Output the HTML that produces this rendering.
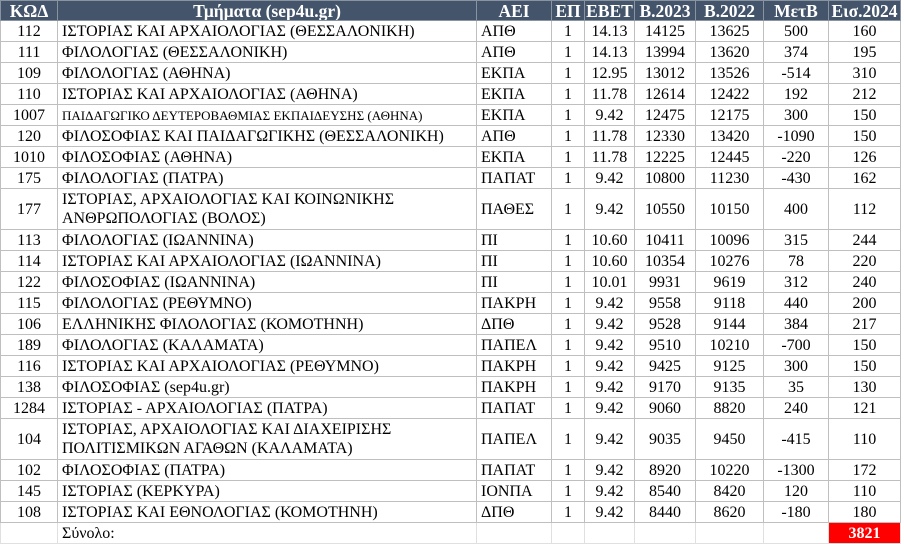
<!DOCTYPE html>
<html><head><meta charset="utf-8"><style>
body{margin:0;background:#fff;width:904px;height:544px;overflow:hidden}
table{border-collapse:collapse;table-layout:fixed;font-family:"Liberation Serif","DejaVu Serif",serif;font-size:16px;color:#000;position:absolute;left:0;top:0}
td,th{border:1px solid #bfbfbf;padding:0 4px;height:20px;line-height:17px;white-space:nowrap;overflow:hidden}
th{background:#44546a;color:#fff;font-weight:bold;text-align:center;border-color:#8a93a0;height:19px;font-size:17.5px;line-height:18px}
td{text-align:center}
td.n{text-align:left}
tr.d td{height:40px}
td.t{white-space:normal;line-height:19px}
.sm{font-size:13px}
.red{background:#ff0000;color:#fff;font-weight:bold}
tr.e td{border-color:#e0e0e0}
</style></head><body>
<table>
<colgroup><col style="width:57px"><col style="width:419px"><col style="width:75px"><col style="width:33px"><col style="width:50px"><col style="width:61px"><col style="width:68px"><col style="width:65px"><col style="width:72px"></colgroup>
<tr><th>ΚΩΔ</th><th>Τμήματα (sep4u.gr)</th><th>ΑΕΙ</th><th style="padding:0">ΕΠ</th><th style="padding:0">ΕΒΕΤ</th><th style="padding:0">Β.2023</th><th style="padding:0">Β.2022</th><th>ΜετΒ</th><th style="padding:0">Εισ.2024</th></tr>
<tr><td>112</td><td class="n">ΙΣΤΟΡΙΑΣ ΚΑΙ ΑΡΧΑΙΟΛΟΓΙΑΣ (ΘΕΣΣΑΛΟΝΙΚΗ)</td><td class="n">ΑΠΘ</td><td>1</td><td>14.13</td><td>14125</td><td>13625</td><td>500</td><td>160</td></tr>
<tr><td>111</td><td class="n">ΦΙΛΟΛΟΓΙΑΣ (ΘΕΣΣΑΛΟΝΙΚΗ)</td><td class="n">ΑΠΘ</td><td>1</td><td>14.13</td><td>13994</td><td>13620</td><td>374</td><td>195</td></tr>
<tr><td>109</td><td class="n">ΦΙΛΟΛΟΓΙΑΣ (ΑΘΗΝΑ)</td><td class="n">ΕΚΠΑ</td><td>1</td><td>12.95</td><td>13012</td><td>13526</td><td>-514</td><td>310</td></tr>
<tr><td>110</td><td class="n">ΙΣΤΟΡΙΑΣ ΚΑΙ ΑΡΧΑΙΟΛΟΓΙΑΣ (ΑΘΗΝΑ)</td><td class="n">ΕΚΠΑ</td><td>1</td><td>11.78</td><td>12614</td><td>12422</td><td>192</td><td>212</td></tr>
<tr><td>1007</td><td class="n sm">ΠΑΙΔΑΓΩΓΙΚΟ ΔΕΥΤΕΡΟΒΑΘΜΙΑΣ ΕΚΠΑΙΔΕΥΣΗΣ (ΑΘΗΝΑ)</td><td class="n">ΕΚΠΑ</td><td>1</td><td>9.42</td><td>12475</td><td>12175</td><td>300</td><td>150</td></tr>
<tr><td>120</td><td class="n">ΦΙΛΟΣΟΦΙΑΣ ΚΑΙ ΠΑΙΔΑΓΩΓΙΚΗΣ (ΘΕΣΣΑΛΟΝΙΚΗ)</td><td class="n">ΑΠΘ</td><td>1</td><td>11.78</td><td>12330</td><td>13420</td><td>-1090</td><td>150</td></tr>
<tr><td>1010</td><td class="n">ΦΙΛΟΣΟΦΙΑΣ (ΑΘΗΝΑ)</td><td class="n">ΕΚΠΑ</td><td>1</td><td>11.78</td><td>12225</td><td>12445</td><td>-220</td><td>126</td></tr>
<tr><td>175</td><td class="n">ΦΙΛΟΛΟΓΙΑΣ (ΠΑΤΡΑ)</td><td class="n">ΠΑΠΑΤ</td><td>1</td><td>9.42</td><td>10800</td><td>11230</td><td>-430</td><td>162</td></tr>
<tr class="d"><td>177</td><td class="n t">ΙΣΤΟΡΙΑΣ, ΑΡΧΑΙΟΛΟΓΙΑΣ ΚΑΙ ΚΟΙΝΩΝΙΚΗΣ<br>ΑΝΘΡΩΠΟΛΟΓΙΑΣ (ΒΟΛΟΣ)</td><td class="n">ΠΑΘΕΣ</td><td>1</td><td>9.42</td><td>10550</td><td>10150</td><td>400</td><td>112</td></tr>
<tr><td>113</td><td class="n">ΦΙΛΟΛΟΓΙΑΣ (ΙΩΑΝΝΙΝΑ)</td><td class="n">ΠΙ</td><td>1</td><td>10.60</td><td>10411</td><td>10096</td><td>315</td><td>244</td></tr>
<tr><td>114</td><td class="n">ΙΣΤΟΡΙΑΣ ΚΑΙ ΑΡΧΑΙΟΛΟΓΙΑΣ (ΙΩΑΝΝΙΝΑ)</td><td class="n">ΠΙ</td><td>1</td><td>10.60</td><td>10354</td><td>10276</td><td>78</td><td>220</td></tr>
<tr><td>122</td><td class="n">ΦΙΛΟΣΟΦΙΑΣ (ΙΩΑΝΝΙΝΑ)</td><td class="n">ΠΙ</td><td>1</td><td>10.01</td><td>9931</td><td>9619</td><td>312</td><td>240</td></tr>
<tr><td>115</td><td class="n">ΦΙΛΟΛΟΓΙΑΣ (ΡΕΘΥΜΝΟ)</td><td class="n">ΠΑΚΡΗ</td><td>1</td><td>9.42</td><td>9558</td><td>9118</td><td>440</td><td>200</td></tr>
<tr><td>106</td><td class="n">ΕΛΛΗΝΙΚΗΣ ΦΙΛΟΛΟΓΙΑΣ (ΚΟΜΟΤΗΝΗ)</td><td class="n">ΔΠΘ</td><td>1</td><td>9.42</td><td>9528</td><td>9144</td><td>384</td><td>217</td></tr>
<tr><td>189</td><td class="n">ΦΙΛΟΛΟΓΙΑΣ (ΚΑΛΑΜΑΤΑ)</td><td class="n">ΠΑΠΕΛ</td><td>1</td><td>9.42</td><td>9510</td><td>10210</td><td>-700</td><td>150</td></tr>
<tr><td>116</td><td class="n">ΙΣΤΟΡΙΑΣ ΚΑΙ ΑΡΧΑΙΟΛΟΓΙΑΣ (ΡΕΘΥΜΝΟ)</td><td class="n">ΠΑΚΡΗ</td><td>1</td><td>9.42</td><td>9425</td><td>9125</td><td>300</td><td>150</td></tr>
<tr><td>138</td><td class="n">ΦΙΛΟΣΟΦΙΑΣ (sep4u.gr)</td><td class="n">ΠΑΚΡΗ</td><td>1</td><td>9.42</td><td>9170</td><td>9135</td><td>35</td><td>130</td></tr>
<tr><td>1284</td><td class="n">ΙΣΤΟΡΙΑΣ - ΑΡΧΑΙΟΛΟΓΙΑΣ (ΠΑΤΡΑ)</td><td class="n">ΠΑΠΑΤ</td><td>1</td><td>9.42</td><td>9060</td><td>8820</td><td>240</td><td>121</td></tr>
<tr class="d"><td>104</td><td class="n t">ΙΣΤΟΡΙΑΣ, ΑΡΧΑΙΟΛΟΓΙΑΣ ΚΑΙ ΔΙΑΧΕΙΡΙΣΗΣ<br>ΠΟΛΙΤΙΣΜΙΚΩΝ ΑΓΑΘΩΝ (ΚΑΛΑΜΑΤΑ)</td><td class="n">ΠΑΠΕΛ</td><td>1</td><td>9.42</td><td>9035</td><td>9450</td><td>-415</td><td>110</td></tr>
<tr><td>102</td><td class="n">ΦΙΛΟΣΟΦΙΑΣ (ΠΑΤΡΑ)</td><td class="n">ΠΑΠΑΤ</td><td>1</td><td>9.42</td><td>8920</td><td>10220</td><td>-1300</td><td>172</td></tr>
<tr><td>145</td><td class="n">ΙΣΤΟΡΙΑΣ (ΚΕΡΚΥΡΑ)</td><td class="n">ΙΟΝΠΑ</td><td>1</td><td>9.42</td><td>8540</td><td>8420</td><td>120</td><td>110</td></tr>
<tr><td>108</td><td class="n">ΙΣΤΟΡΙΑΣ ΚΑΙ ΕΘΝΟΛΟΓΙΑΣ (ΚΟΜΟΤΗΝΗ)</td><td class="n">ΔΠΘ</td><td>1</td><td>9.42</td><td>8440</td><td>8620</td><td>-180</td><td>180</td></tr>
<tr class="e"><td></td><td class="n">Σύνολο:</td><td></td><td></td><td></td><td></td><td></td><td></td><td class="red">3821</td></tr>
</table>
</body></html>
